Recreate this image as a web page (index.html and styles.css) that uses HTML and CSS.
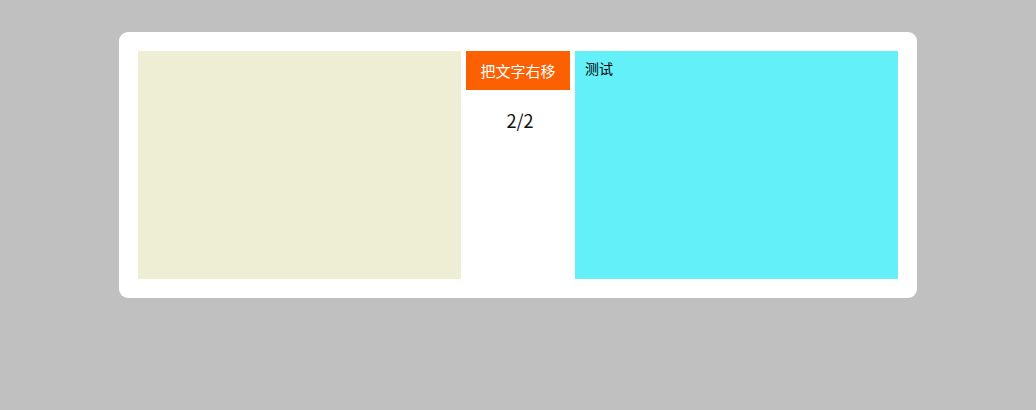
FILE: index.html
```html
<!DOCTYPE html>
<html lang="zh">
<head>
<meta charset="utf-8">
<link rel="stylesheet" href="styles.css">
</head>
<body>
<div class="card">
  <div class="box box-left"></div>
  <div class="middle">
    <div class="btn">把文字右移</div>
    <div class="counter">2/2</div>
  </div>
  <div class="box box-right">测试</div>
</div>
</body>
</html>
```
FILE: styles.css
```css
html, body {
  margin: 0;
  padding: 0;
}
body {
  background: #c0c0c0;
  width: 1036px;
  height: 410px;
  font-family: "Noto Sans CJK SC", "Noto Sans", sans-serif;
  padding-top: 32px;
  box-sizing: border-box;
}
.card {
  width: 798px;
  margin-left: 119px;
  box-sizing: border-box;
  padding: 19px;
  background: #fff;
  border-radius: 9px;
  display: flex;
  gap: 5px;
}
.box {
  width: 323px;
  height: 228px;
  box-sizing: border-box;
}
.box-left {
  background: #eeeed5;
}
.box-right {
  background: #64f0f8;
  padding: 7px 10px;
  font-size: 14px;
  line-height: 20px;
  color: #000;
}
.middle {
  width: 104px;
  display: flex;
  flex-direction: column;
  align-items: center;
}
.btn {
  width: 104px;
  height: 39px;
  background: #fb6102;
  color: #fff;
  font-size: 15px;
  line-height: 39px;
  text-align: center;
}
.counter {
  margin-top: 18px;
  padding-left: 4px;
  font-size: 18px;
  line-height: 24px;
  color: #111;
}
```
